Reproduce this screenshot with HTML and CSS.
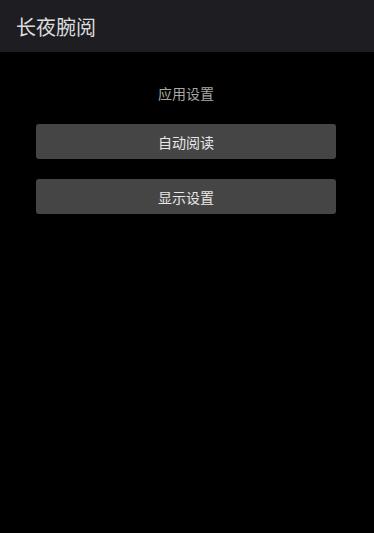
FILE: index.html
```html
<!DOCTYPE html>
<html lang="zh-CN">
<head>
    <meta charset="UTF-8">
    <meta name="viewport" content="width=device-width, initial-scale=1.0">
    <title>长夜腕阅</title>
    <link rel="stylesheet" href="styles.css">
</head>
<body>
    <header class="app-bar">
        <h1 class="app-title">长夜腕阅</h1>
    </header>

    <main class="settings">
        <p class="section-label">应用设置</p>
        <button class="setting-btn">自动阅读</button>
        <button class="setting-btn">显示设置</button>
    </main>
</body>
</html>
```

FILE: styles.css
```css
body {
    margin: 0;
    min-height: 100vh;
    background: #000;
    color: #e6e6e6;
    font-family: "Noto Sans CJK SC", "Noto Sans", sans-serif;
}

.app-bar {
    height: 52px;
    background: #1e1d22;
    display: flex;
    align-items: center;
    padding: 0 16px;
}

.app-title {
    margin: 0;
    font-size: 20px;
    font-weight: normal;
    color: #dcdcdc;
}

.settings {
    display: flex;
    flex-direction: column;
    align-items: center;
    padding: 31px 38px 0 36px;
}

.section-label {
    margin: 0 0 21px;
    font-size: 14px;
    line-height: 20px;
    color: #a8a8a8;
}

.setting-btn {
    width: 100%;
    height: 35px;
    margin-bottom: 20px;
    background: #454545;
    color: #e8e8e8;
    border: none;
    border-radius: 3px;
    font-family: inherit;
    font-size: 14px;
    cursor: pointer;
}
```
